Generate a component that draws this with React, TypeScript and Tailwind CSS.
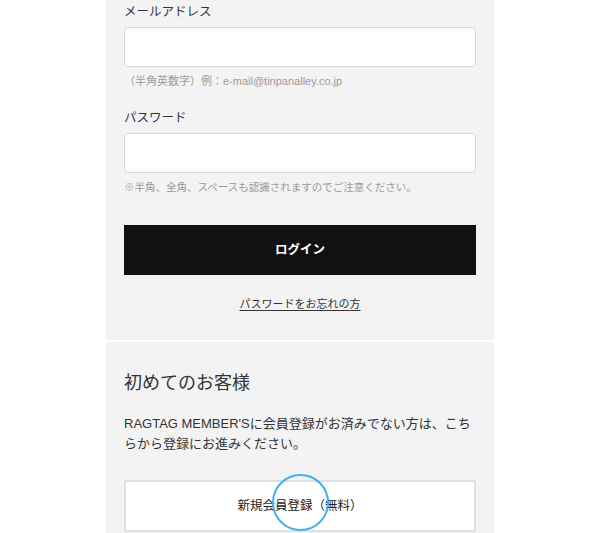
const font = { fontFamily: '"Liberation Sans", "Noto Sans CJK JP", sans-serif' };

const Field = ({ label, hint, hintSize }: { label: string; hint: string; hintSize: string }) => (
  <div className="flex flex-col">
    <label className="text-[12.5px] leading-[20px] text-[#333]">{label}</label>
    <input className="mt-[5px] h-10 w-full rounded-[4px] border border-[#d6d6d6] bg-white px-3 outline-none" />
    <p className={`mt-[5px] ${hintSize} leading-[18px] text-[#9a9a9a]`}>{hint}</p>
  </div>
);

export default function App() {
  return (
    <div className="min-h-[533px] w-full bg-white" style={font}>
      <div className="relative mx-auto w-[388px] overflow-hidden bg-[#f3f3f3]">
        {/* ログイン */}
        <section className="px-[18px] pt-[2px] pb-[27px]">
          <Field label="メールアドレス" hint="（半角英数字）例：e-mail@tinpanalley.co.jp" hintSize="text-[11px]" />
          <div className="mt-[18px]">
            <Field label="パスワード" hint="※半角、全角、スペースも認識されますのでご注意ください。" hintSize="text-[10.5px]" />
          </div>
          <button className="mt-[29px] flex h-[50px] w-full items-center justify-center bg-[#111] text-[12.5px] font-bold text-white">
            ログイン
          </button>
          <p className="mt-5 text-center text-[11px] leading-[18px]">
            <a className="text-[#333] underline underline-offset-2">パスワードをお忘れの方</a>
          </p>
        </section>
        <div className="h-[2px] bg-white" />
        {/* 初めてのお客様 */}
        <section className="px-[18px] pt-[28px] pb-6">
          <h2 className="text-[18px] leading-[26px] text-[#333]">初めてのお客様</h2>
          <p className="mt-[18px] text-[13px] leading-[20px] text-[#333]">
            RAGTAG MEMBER'Sに会員登録がお済みでない方は、こち
            <br />
            らから登録にお進みください。
          </p>
          <button className="mt-[26px] flex h-[52px] w-full items-center justify-center border-2 border-[#e0e0e0] bg-white text-[12.5px] text-[#222]">
            新規会員登録（無料）
          </button>
        </section>
        {/* タップ表示 */}
        <div className="pointer-events-none absolute left-[166px] top-[474px] h-[57px] w-[57px] rounded-full border-2 border-[#45b0f0]" />
      </div>
    </div>
  );
}
